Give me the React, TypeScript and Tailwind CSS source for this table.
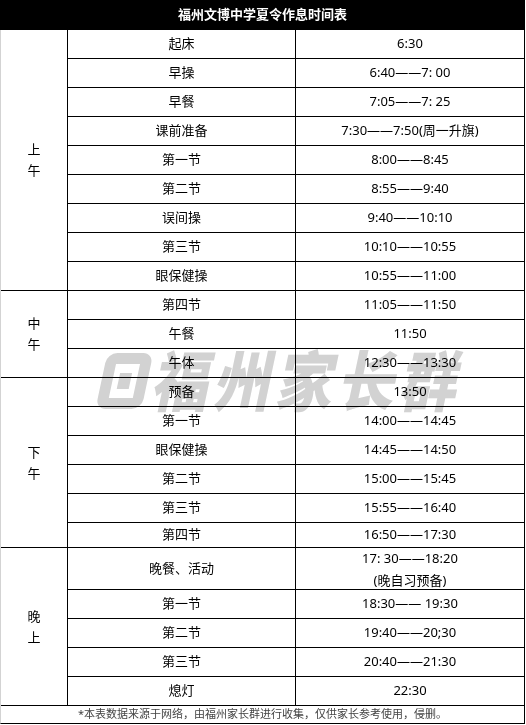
import React from 'react';

type Row = { name: string; time: React.ReactNode; h?: 'short' | 'tall' };

const sections: { label: string[]; rows: Row[] }[] = [
  {
    label: ['上', '午'],
    rows: [
      { name: '起床', time: '6:30' },
      { name: '早操', time: '6:40——7: 00' },
      { name: '早餐', time: '7:05——7: 25' },
      { name: '课前准备', time: '7:30——7:50(周一升旗)' },
      { name: '第一节', time: '8:00——8:45' },
      { name: '第二节', time: '8:55——9:40' },
      { name: '误间操', time: '9:40——10:10' },
      { name: '第三节', time: '10:10——10:55' },
      { name: '眼保健操', time: '10:55——11:00' },
    ],
  },
  {
    label: ['中', '午'],
    rows: [
      { name: '第四节', time: '11:05——11:50' },
      { name: '午餐', time: '11:50' },
      { name: '午体', time: '12:30——13:30' },
    ],
  },
  {
    label: ['下', '午'],
    rows: [
      { name: '预备', time: '13:50' },
      { name: '第一节', time: '14:00——14:45' },
      { name: '眼保健操', time: '14:45——14:50' },
      { name: '第二节', time: '15:00——15:45' },
      { name: '第三节', time: '15:55——16:40' },
      { name: '第四节', time: '16:50——17:30', h: 'short' },
    ],
  },
  {
    label: ['晚', '上'],
    rows: [
      {
        name: '晚餐、活动',
        time: (
          <div className="flex flex-col items-center leading-[22px]">
            <span>17: 30——18:20</span>
            <span>(晚自习预备)</span>
          </div>
        ),
        h: 'tall',
      },
      { name: '第一节', time: '18:30—— 19:30' },
      { name: '第二节', time: '19:40——20;30' },
      { name: '第三节', time: '20:40——21:30' },
      { name: '熄灯', time: '22:30' },
    ],
  },
];

const spans: Record<number, string> = {
  0: 'row-span-9',
  1: 'row-span-3',
  2: 'row-span-6',
  3: 'row-span-5',
};

export default function App() {
  return (
    <div className="relative w-[526px] bg-white font-['Noto_Sans','Noto_Sans_CJK_SC',sans-serif] text-[13px] text-black">
      <div className="flex h-[30px] w-[525px] items-center justify-center bg-black text-[13px] font-bold text-white">
        福州文博中学夏令作息时间表
      </div>

      <div className="grid w-[525px] grid-cols-[66px_227px_228px] grid-rows-[repeat(17,28px)_24px_41px_repeat(4,28px)_17px] gap-px border-b border-l border-r border-b-black border-l-[#d3d3d3] border-r-black bg-black">
        {sections.map((sec, si) => (
          <React.Fragment key={si}>
            <div
              className={`${spans[si]} col-start-1 flex items-center justify-center bg-white`}
            >
              <div className="flex flex-col items-center leading-[21px]">
                {sec.label.map((c) => (
                  <span key={c}>{c}</span>
                ))}
              </div>
            </div>
            {sec.rows.map((r, ri) => (
              <React.Fragment key={ri}>
                <div className="col-start-2 flex items-center justify-center bg-white">
                  {r.name}
                </div>
                <div className="col-start-3 flex items-center justify-center bg-white">
                  {r.time}
                </div>
              </React.Fragment>
            ))}
          </React.Fragment>
        ))}
        <div className="col-span-3 flex items-center justify-center bg-white text-[11px] text-[#444]">
          *本表数据来源于网络，由福州家长群进行收集，仅供家长参考使用，侵删。
        </div>
      </div>

      {/* watermark */}
      <div className="pointer-events-none absolute left-[108px] top-[350px] flex h-[62px] origin-top-left -skew-x-12 items-center gap-[8px] text-[#d2d2d2] mix-blend-multiply">
        <div className="flex h-[56px] w-[46px] items-center justify-center rounded-[10px] border-[11px] border-[#d2d2d2]">
          <div className="h-[16px] w-[12px] bg-[#d2d2d2]" />
        </div>
        <span className="inline-block origin-left scale-y-[1.15] text-[57px] leading-none font-black tracking-[5px]">
          福州家长群
        </span>
      </div>
    </div>
  );
}
